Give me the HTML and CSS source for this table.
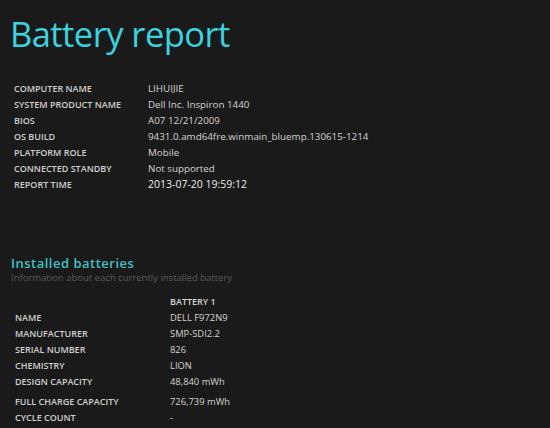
FILE: index.html
```html
<!DOCTYPE html>
<html>
<head>
<meta charset="utf-8">
<link rel="stylesheet" href="styles.css">
</head>
<body>
<h1 class="title">Battery report</h1>
<div class="info">
  <div class="row"><span class="lbl">COMPUTER NAME</span><span class="val">LIHUIJIE</span></div>
  <div class="row"><span class="lbl">SYSTEM PRODUCT NAME</span><span class="val">Dell Inc. Inspiron 1440</span></div>
  <div class="row"><span class="lbl">BIOS</span><span class="val">A07 12/21/2009</span></div>
  <div class="row"><span class="lbl">OS BUILD</span><span class="val">9431.0.amd64fre.winmain_bluemp.130615-1214</span></div>
  <div class="row"><span class="lbl">PLATFORM ROLE</span><span class="val">Mobile</span></div>
  <div class="row"><span class="lbl">CONNECTED STANDBY</span><span class="val">Not supported</span></div>
  <div class="row"><span class="lbl">REPORT TIME</span><span class="val strong">2013-07-20 19:59:12</span></div>
</div>
<h2 class="section">Installed batteries</h2>
<div class="sub">Information about each currently installed battery</div>
<div class="bat">
  <div class="row head"><span class="lbl2"></span><span class="val2">BATTERY 1</span></div>
  <div class="row"><span class="lbl2">NAME</span><span class="val2">DELL F972N9</span></div>
  <div class="row"><span class="lbl2">MANUFACTURER</span><span class="val2">SMP-SDI2.2</span></div>
  <div class="row"><span class="lbl2">SERIAL NUMBER</span><span class="val2">826</span></div>
  <div class="row"><span class="lbl2">CHEMISTRY</span><span class="val2">LION</span></div>
  <div class="row"><span class="lbl2">DESIGN CAPACITY</span><span class="val2">48,840 mWh</span></div>
  <div class="row gap"><span class="lbl2">FULL CHARGE CAPACITY</span><span class="val2">726,739 mWh</span></div>
  <div class="row"><span class="lbl2">CYCLE COUNT</span><span class="val2">-</span></div>
</div>
</body>
</html>
```
FILE: styles.css
```css
html, body {
  margin: 0;
  padding: 0;
  background: #1b1a1a;
  height: 100%;
  overflow: hidden;
}
body {
  font-family: "Open Sans", "Noto Sans", sans-serif;
  color: #d2d2d2;
}
.title {
  margin: 0;
  padding: 11px 0 0 10px;
  font-weight: 400;
  font-size: 34.5px;
  line-height: 46px;
  color: #3ad3df;
  letter-spacing: -0.55px;
}
.info {
  padding: 23px 0 0 14px;
  font-size: 9px;
}
.row {
  display: flex;
  height: 16px;
  align-items: center;
}
.lbl {
  width: 134px;
  font-weight: 600;
  color: #cfcfcf;
}
.val {
  font-size: 9.8px;
  color: #d4d4d4;
}
.val.strong {
  font-size: 10.5px;
  color: #ececec;
}
.section {
  margin: 63px 0 0 11px;
  font-size: 13px;
  font-weight: 600;
  line-height: 16px;
  color: #3fc2c8;
  letter-spacing: 0.5px;
}
.sub {
  margin-left: 11px;
  font-size: 9.5px;
  line-height: 13px;
  color: #5a5a5a;
}
.bat {
  padding: 9px 0 0 15px;
  font-size: 9px;
}
.lbl2 {
  width: 155px;
  font-weight: 600;
  color: #cfcfcf;
}
.val2 {
  font-size: 9.4px;
  color: #d4d4d4;
}
.head .val2 {
  font-weight: 600;
  font-size: 9px;
}
.row.gap {
  margin-top: 4px;
}
```
